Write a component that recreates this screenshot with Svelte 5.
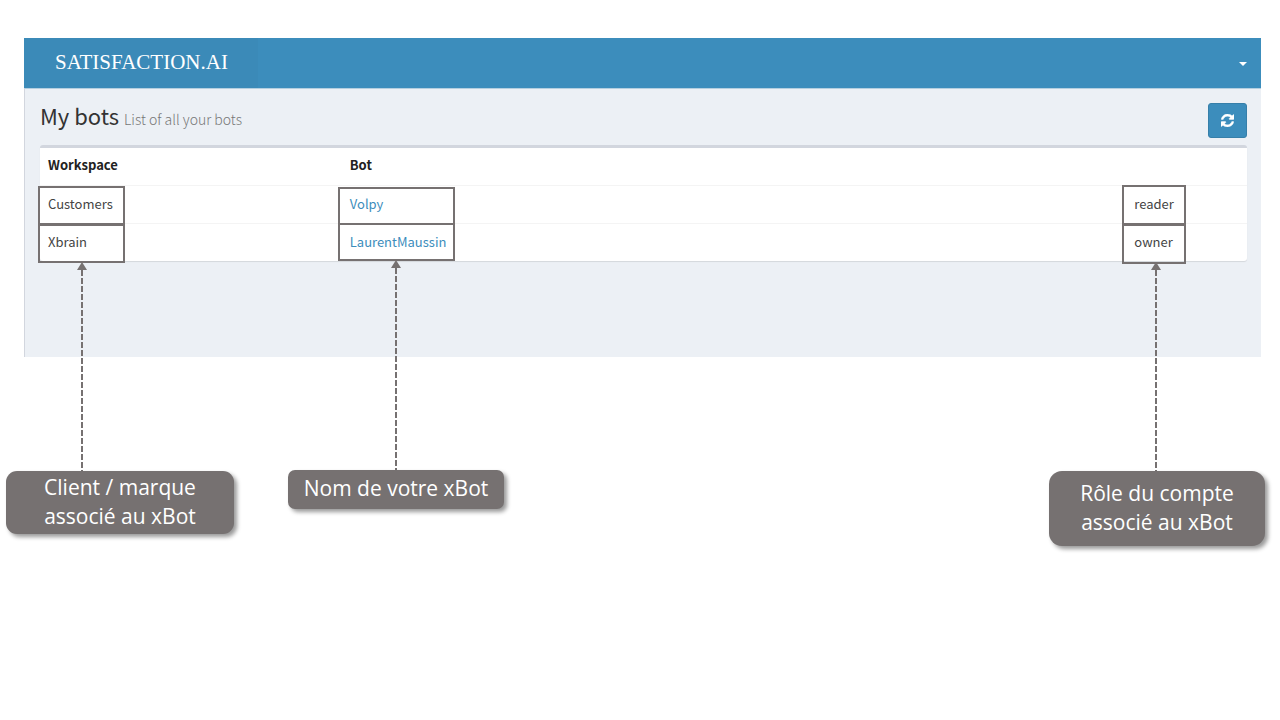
<script lang="ts">
	interface Bot {
		workspace: string;
		name: string;
		role: string;
	}

	const bots: Bot[] = [
		{ workspace: 'Customers', name: 'Volpy', role: 'reader' },
		{ workspace: 'Xbrain', name: 'LaurentMaussin', role: 'owner' }
	];

	// One annotation per column: frames over the cells, an arrow and a caption.
	const notes = [
		{ id: 'workspace', lines: ['Client / marque', 'associé au xBot'] },
		{ id: 'bot', lines: ['Nom de votre xBot'] },
		{ id: 'role', lines: ['Rôle du compte', 'associé au xBot'] }
	];
</script>

<div class="slide">
	<div class="app">
		<header class="navbar">
			<a class="navbar__logo" href="#home">SATISFACTION.AI</a>
			<button class="navbar__toggle" type="button" aria-label="Account menu">
				<svg width="8" height="4" viewBox="0 0 8 4"><path d="M0 0h8L4 4z" fill="currentColor" /></svg>
			</button>
		</header>

		<main class="content">
			<div class="content__head">
				<h1 class="content__title">My bots <small>List of all your bots</small></h1>
				<button class="refresh" type="button" aria-label="Refresh">
					<svg width="13" height="13" viewBox="0 0 1536 1536">
						<path
							fill="currentColor"
							stroke="currentColor"
							stroke-width="50"
							d="M1511 928q0 5-1 7-64 268-268 434.500T764 1536q-146 0-282.500-55T238 1324l-129 129q-19 19-45 19t-45-19-19-45V960q0-26 19-45t45-19h448q26 0 45 19t19 45-19 45l-137 137q71 66 161 102t187 36q134 0 250-65t186-179q11-17 53-117 8-23 30-23h192q13 0 22.500 9.500t9.500 22.500zm25-800v448q0 26-19 45t-45 19h-448q-26 0-45-19t-19-45 19-45l138-138Q969 256 768 256q-134 0-250 65T332 500q-11 17-53 117-8 23-30 23H50q-13 0-22.500-9.500T18 608v-7q65-268 270-434.500T768 0q146 0 284 55.500T1297 212l130-129q19-19 45-19t45 19 19 45z"
						/>
					</svg>
				</button>
			</div>

			<div class="box">
				<table class="bots">
					<thead>
						<tr>
							<th class="bots__workspace" scope="col">Workspace</th>
							<th scope="col">Bot</th>
							<th class="bots__role" scope="col" aria-label="Role"></th>
						</tr>
					</thead>
					<tbody>
						{#each bots as bot (bot.name)}
							<tr>
								<td>{bot.workspace}</td>
								<td><a href="#{bot.name}">{bot.name}</a></td>
								<td>{bot.role}</td>
							</tr>
						{/each}
					</tbody>
				</table>
			</div>
		</main>
	</div>

	{#each notes as note (note.id)}
		<div class="frames frames--{note.id}" aria-hidden="true">
			<span></span>
			<span></span>
		</div>
		<svg class="arrow arrow--{note.id}" width="10" height="210" viewBox="0 0 10 210" aria-hidden="true">
			<path d="M5 0l5 8H0z" fill="#767171" />
			<path d="M5 8v202" stroke="#767171" stroke-width="2" stroke-dasharray="6 2" />
		</svg>
		<p class="note note--{note.id}">
			{#each note.lines as line}
				<span>{line}</span>
			{/each}
		</p>
	{/each}
</div>

<style>
	:global(body) {
		margin: 0;
		background: #fff;
	}

	.slide {
		position: relative;
		min-height: 100vh;
		box-sizing: border-box;
		padding: 38px 19px 0 24px;
		font-family: 'Noto Sans CJK JP', 'Open Sans', sans-serif;
		font-size: 13px;
		color: #444;
	}

	.navbar {
		display: flex;
		align-items: stretch;
		justify-content: space-between;
		height: 50px;
		background: #3c8dbc;
	}

	.navbar__logo {
		display: flex;
		align-items: center;
		width: 234px;
		box-sizing: border-box;
		padding: 0 0 2px 31px;
		background: #3b8ab8;
		color: #fff;
		font-family: 'Liberation Serif', serif;
		font-size: 21px;
		text-decoration: none;
	}

	.navbar__toggle {
		display: flex;
		align-items: center;
		padding: 2px 14px 0;
		border: 0;
		background: none;
		color: #fff;
	}

	.content {
		min-height: 269px;
		box-sizing: border-box;
		padding: 14px 14px 0 15px;
		border-left: 1px solid #d2d6de;
		border-top: 1px solid #b4cfe0;
		background: #ecf0f5;
	}

	.content__head {
		display: flex;
		align-items: flex-start;
		justify-content: space-between;
		height: 42px;
	}

	.content__title {
		margin: 0;
		font-size: 22px;
		font-weight: 400;
		line-height: 24px;
		color: #333;
	}

	.content__title small {
		font-size: 14px;
		font-weight: 300;
		color: #777;
	}

	.refresh {
		display: flex;
		align-items: center;
		justify-content: center;
		width: 39px;
		height: 35px;
		padding: 0;
		border: 1px solid #367fa9;
		border-radius: 3px;
		background: #3c8dbc;
		color: #fff;
	}

	.box {
		border-top: 3px solid #d2d6de;
		border-radius: 3px;
		background: #fff;
		box-shadow: 0 1px 1px rgba(0, 0, 0, 0.1);
	}

	.bots {
		width: 100%;
		border-collapse: collapse;
		table-layout: fixed;
	}

	.bots th,
	.bots td {
		box-sizing: border-box;
		height: 38px;
		padding: 0 8px;
		text-align: left;
		line-height: 20px;
	}

	.bots th {
		height: 37px;
		padding-bottom: 2px;
		color: #222;
		font-weight: 700;
	}

	.bots td {
		border-top: 1px solid #f4f4f4;
	}

	.bots a {
		color: #3c8dbc;
		text-decoration: none;
	}

	.bots .bots__workspace {
		width: 25%;
	}

	.bots .bots__role {
		width: 10%;
	}

	.frames {
		position: absolute;
		display: flex;
		flex-direction: column;
	}

	.frames span {
		height: 35px;
		border: 2px solid #767171;
	}

	.frames span + span {
		margin-top: -1px;
	}

	.frames--workspace {
		top: 186px;
		left: 38px;
		width: 87px;
	}

	.frames--bot {
		top: 187px;
		left: 338px;
		width: 117px;
	}

	.frames--bot span {
		height: 34px;
	}

	.frames--bot span + span {
		margin-top: -2px;
	}

	.frames--role {
		top: 185px;
		right: 94px;
		width: 64px;
	}

	.frames--role span {
		height: 36px;
	}

	.arrow {
		position: absolute;
		top: 262px;
	}

	.arrow--workspace {
		left: 77px;
	}

	.arrow--bot {
		top: 260px;
		left: 391px;
	}

	.arrow--role {
		right: 119px;
	}

	.note {
		position: absolute;
		display: flex;
		flex-direction: column;
		align-items: center;
		justify-content: center;
		box-sizing: border-box;
		margin: 0;
		padding-bottom: 2px;
		border-radius: 11px;
		background: #767171;
		box-shadow: 3px 3px 4px rgba(0, 0, 0, 0.4);
		color: #fff;
		font-family: 'Open Sans', 'Noto Sans', sans-serif;
		font-size: 21px;
		line-height: 29px;
		white-space: nowrap;
	}

	.note--workspace {
		top: 471px;
		left: 6px;
		width: 228px;
		height: 63px;
	}

	.note--bot {
		top: 470px;
		left: 288px;
		width: 216px;
		height: 39px;
		border-radius: 7px;
	}

	.note--role {
		top: 471px;
		right: 15px;
		width: 216px;
		height: 75px;
		border-radius: 13px;
	}
</style>
